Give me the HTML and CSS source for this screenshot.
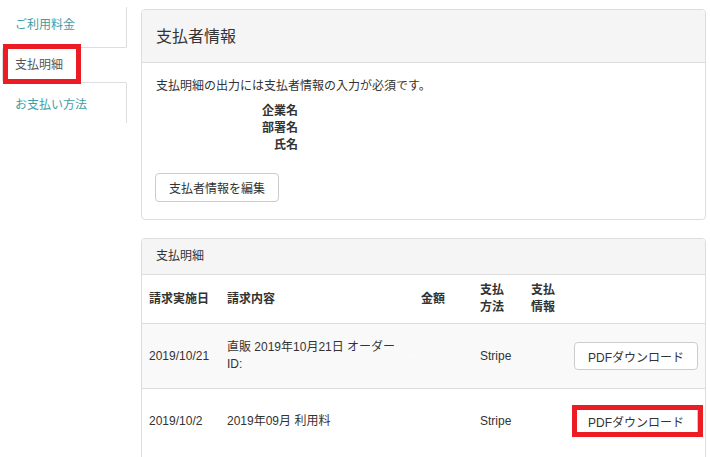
FILE: index.html
```html
<!DOCTYPE html>
<html lang="ja">
<head>
<meta charset="utf-8">
<title>支払明細</title>
<link rel="stylesheet" href="styles.css">
</head>
<body>
<div class="page">
  <nav class="side">
    <ul class="tabs">
      <li class="tab"><a class="tab-link">ご利用料金</a></li>
      <li class="tab active"><a class="tab-link">支払明細</a><span class="mark mark-tab"></span></li>
      <li class="tab"><a class="tab-link">お支払い方法</a></li>
    </ul>
  </nav>
  <main class="main">
    <section class="panel">
      <div class="panel-head big">支払者情報</div>
      <div class="panel-body">
        <p class="note">支払明細の出力には支払者情報の入力が必須です。</p>
        <dl class="info">
          <dt>企業名</dt><dd></dd>
          <dt>部署名</dt><dd></dd>
          <dt>氏名</dt><dd></dd>
        </dl>
        <button class="btn btn-edit">支払者情報を編集</button>
      </div>
    </section>
    <section class="panel">
      <div class="panel-head small">支払明細</div>
      <table class="bills">
        <colgroup>
          <col class="c-date"><col class="c-content"><col class="c-amount"><col class="c-method"><col class="c-info"><col class="c-action">
        </colgroup>
        <thead>
          <tr>
            <th>請求実施日</th>
            <th>請求内容</th>
            <th>金額</th>
            <th>支払<br>方法</th>
            <th>支払<br>情報</th>
            <th></th>
          </tr>
        </thead>
        <tbody>
          <tr class="striped">
            <td>2019/10/21</td>
            <td>直販 2019年10月21日 オーダー<br>ID:</td>
            <td><span class="blank">-</span></td>
            <td>Stripe</td>
            <td></td>
            <td><span class="btn-wrap"><button class="btn btn-pdf">PDFダウンロード</button></span></td>
          </tr>
          <tr class="tall">
            <td>2019/10/2</td>
            <td>2019年09月 利用料</td>
            <td></td>
            <td>Stripe</td>
            <td></td>
            <td><span class="btn-wrap"><button class="btn btn-pdf">PDFダウンロード</button><span class="mark mark-btn"></span></span></td>
          </tr>
        </tbody>
      </table>
    </section>
  </main>
</div>
</body>
</html>
```
FILE: styles.css
```css
html, body {
  margin: 0;
  padding: 0;
  background: #fff;
}
body {
  font-family: "Liberation Sans", "Noto Sans CJK JP", sans-serif;
  font-size: 12px;
  line-height: 17px;
  color: #333;
  overflow: hidden;
}
.page {
  display: flex;
  align-items: flex-start;
}
.side {
  width: 127px;
  flex: none;
}
.tabs {
  list-style: none;
  margin: 7px 0 0;
  padding: 0;
  width: 126px;
  border-right: 1px solid #ddd;
}
.tab {
  position: relative;
  height: 36px;
  margin-bottom: 4px;
}
.tab:last-child {
  margin-bottom: 0;
}
.tab-link {
  display: flex;
  align-items: center;
  box-sizing: border-box;
  height: 36px;
  padding-left: 15px;
  color: #3b9ea7;
  text-decoration: none;
}
.tab.active .tab-link {
  position: relative;
  margin-left: 2px;
  margin-right: -1px;
  padding-left: 12px;
  border: 1px solid #ddd;
  border-right-color: #fff;
  border-radius: 4px 0 0 4px;
  background: #fff;
  color: #555;
}
.mark {
  position: absolute;
  box-sizing: border-box;
  border: 5px solid #ec1c24;
  pointer-events: none;
  z-index: 5;
}
.mark-tab {
  left: 3px;
  top: -3px;
  width: 78px;
  height: 40px;
}
.main {
  margin-left: 14px;
  width: 565px;
  padding-top: 9px;
}
.panel {
  border: 1px solid #ddd;
  border-radius: 4px;
  background: #fff;
  margin-bottom: 18px;
}
.panel-head {
  display: flex;
  align-items: center;
  padding: 0 14px;
  background: #f5f5f5;
  border-bottom: 1px solid #ddd;
  border-radius: 3px 3px 0 0;
}
.panel-head.big {
  height: 52px;
  font-size: 16px;
}
.panel-head.small {
  height: 35px;
}
.panel-body {
  padding: 15px 14px 17px;
}
.note {
  margin: 0 0 8px;
}
.info {
  display: grid;
  grid-template-columns: 142px 1fr;
  margin: 0 0 19px;
}
.info dt {
  font-weight: bold;
  text-align: right;
}
.info dd {
  margin: 0;
}
.btn {
  font-family: inherit;
  font-size: 12px;
  color: #333;
  background: #fff;
  border: 1px solid #ccc;
  border-radius: 4px;
  padding: 0 13px;
  margin: 0;
  white-space: nowrap;
  cursor: pointer;
}
.btn-edit {
  height: 29px;
  margin-left: -1px;
}
.btn-pdf {
  height: 28px;
  display: block;
  width: 124px;
  padding: 0;
}
.bills {
  width: 100%;
  border-collapse: collapse;
  table-layout: fixed;
}
.c-date { width: 78px; }
.c-content { width: 194px; }
.c-amount { width: 59px; }
.c-method { width: 51px; }
.c-info { width: 43px; }
.bills th {
  padding: 7px 7px;
  text-align: left;
  vertical-align: middle;
  font-weight: bold;
  border-bottom: 1px solid #ddd;
}
.bills td {
  padding: 15px 7px;
  vertical-align: middle;
  border-bottom: 1px solid #ddd;
  white-space: nowrap;
}
.bills tr.tall td {
  padding: 18px 7px 26px;
}
.bills tr.striped td {
  background: #f9f9f9;
}
.blank {
  color: #fff;
  margin-left: -13px;
}
.btn-wrap {
  position: relative;
  display: inline-block;
}
.mark-btn {
  left: -2px;
  top: -2px;
  width: 131px;
  height: 32px;
}
```
